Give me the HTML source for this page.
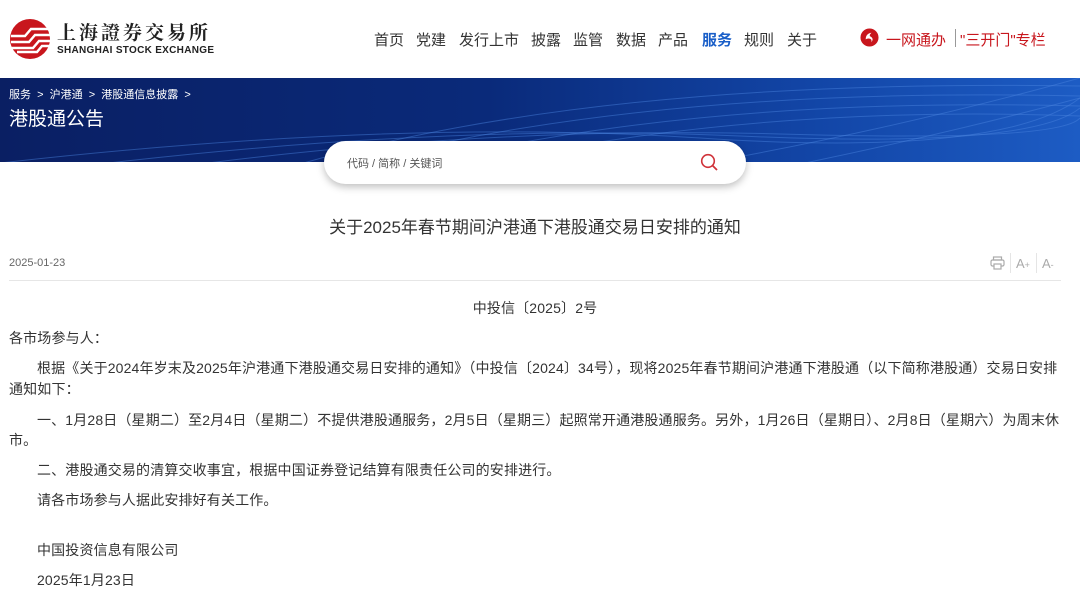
<!DOCTYPE html>
<html><head><meta charset="utf-8"><style>
*{margin:0;padding:0;box-sizing:border-box}
body{width:1080px;height:599px;overflow:hidden;background:#fff;font-family:"Liberation Sans","Noto Sans CJK SC",sans-serif;color:#333;position:relative}
.a{position:absolute;white-space:nowrap}
.nav span{position:absolute;top:29px;font-size:15px;color:#333}
.t{font-size:14px;color:#333;letter-spacing:0.15px}
</style></head><body>
<!-- logo -->
<svg class="a" style="left:9px;top:18px" width="42" height="42" viewBox="0 0 42 42">
<circle cx="21" cy="21" r="20" fill="#c8161d"/>
<path d="M2 18 H16 L22 11 H41 M2 24 H20 L26 17 H41 M2 30 H24 L30 23 H41 M8 34 H28 L33 28 H40" stroke="#fff" stroke-width="2.4" fill="none"/>
</svg>
<div class="a" style="left:57px;top:18px;font-size:19px;font-weight:bold;color:#222;font-family:'Noto Serif CJK SC',serif;letter-spacing:3px">上海證券交易所</div>
<div class="a" style="left:57px;top:45px;font-size:10px;font-weight:bold;color:#222;letter-spacing:0.3px">SHANGHAI STOCK EXCHANGE</div>
<div class="nav">
<span style="left:374px">首页</span><span style="left:416px">党建</span><span style="left:459px">发行上市</span><span style="left:531px">披露</span><span style="left:573px">监管</span><span style="left:616px">数据</span><span style="left:658px">产品</span><span style="left:702px;color:#1a5fc8;font-weight:bold">服务</span><span style="left:744px">规则</span><span style="left:787px">关于</span>
</div>
<svg class="a" style="left:860px;top:28px" width="19" height="19" viewBox="0 0 20 20"><circle cx="10" cy="10" r="9.5" fill="#c8161d"/><path d="M6 12 Q6 6 12 5 Q9 8 11 9 Q15 11 12 15 Q13 11 9 11 Q7 11 6 12Z" fill="#fff"/></svg>
<div class="a" style="left:886px;top:29px;font-size:15px;color:#c8161d">一网通办</div>
<div class="a" style="left:955px;top:29px;width:1px;height:18px;background:#999"></div>
<div class="a" style="left:960px;top:29px;font-size:15px;color:#c8161d">"三开门"专栏</div>
<!-- banner -->
<div class="a" style="left:0;top:78px;width:1080px;height:84px;background:linear-gradient(90deg,#0a1f63 0%,#0a2a7a 45%,#1245a6 75%,#1d5cc4 100%);overflow:hidden">
<svg width="1080" height="84" style="position:absolute;left:0;top:0">
<g fill="none" stroke="#4c86e0" stroke-opacity="0.45" stroke-width="1">
<path d="M0 85 Q400 40 700 60 T1080 20"/><path d="M100 86 Q450 45 740 58 T1080 30"/><path d="M200 86 Q500 48 780 56 T1080 40"/>
<path d="M300 86 Q600 0 1080 8"/><path d="M350 86 Q650 8 1080 18"/><path d="M420 86 Q700 18 1080 28"/><path d="M480 86 Q760 26 1080 38"/>
<path d="M700 86 Q900 50 1080 0"/><path d="M800 86 Q950 55 1080 20"/>
</g></svg>
<div class="a" style="left:9px;top:8px;font-size:11px;color:#fff">服务 &nbsp;&gt;&nbsp; 沪港通 &nbsp;&gt;&nbsp; 港股通信息披露 &nbsp;&gt;</div>
<div class="a" style="left:9px;top:26px;font-size:19px;color:#fff">港股通公告</div>
</div>
<!-- search -->
<div class="a" style="left:324px;top:141px;width:422px;height:43px;background:#fff;border-radius:22px;box-shadow:0 3px 8px rgba(0,0,0,0.25)"></div>
<div class="a" style="left:347px;top:155px;font-size:11px;color:#555">代码 / 简称 / 关键词</div>
<svg class="a" style="left:700px;top:153px" width="19" height="19" viewBox="0 0 19 19"><circle cx="8" cy="8" r="6.3" stroke="#d0333a" stroke-width="1.6" fill="none"/><path d="M12.5 12.5 L17 17" stroke="#d0333a" stroke-width="1.8"/></svg>
<!-- title -->
<div class="a" style="left:0;width:1070px;text-align:center;top:213px;font-size:17px;color:#333">关于2025年春节期间沪港通下港股通交易日安排的通知</div>
<div class="a" style="left:9px;top:257px;font-size:11px;color:#666">2025-01-23</div>
<svg class="a" style="left:990px;top:256px" width="15" height="14" viewBox="0 0 15 14"><rect x="3.5" y="1" width="8" height="3" fill="none" stroke="#aaa" stroke-width="1.2"/><rect x="1" y="4" width="13" height="6" rx="1.5" fill="none" stroke="#aaa" stroke-width="1.2"/><rect x="4" y="8" width="7" height="5" fill="#fff" stroke="#aaa" stroke-width="1.2"/></svg>
<div class="a" style="left:1010px;top:253px;width:1px;height:20px;background:#e5e5e5"></div>
<div class="a" style="left:1016px;top:256px;font-size:13px;color:#aaa">A<span style="font-size:9px">+</span></div>
<div class="a" style="left:1036px;top:253px;width:1px;height:20px;background:#e5e5e5"></div>
<div class="a" style="left:1042px;top:256px;font-size:13px;color:#aaa">A<span style="font-size:9px">-</span></div>
<div class="a" style="left:9px;top:280px;width:1052px;height:1px;background:#e6e6e6"></div>
<!-- body -->
<div class="a t" style="left:0;width:1070px;text-align:center;top:298px">中投信〔2025〕2号</div>
<div class="a t" style="left:9px;top:328px">各市场参与人：</div>
<div class="a t" style="left:37px;top:358px">根据《关于2024年岁末及2025年沪港通下港股通交易日安排的通知》（中投信〔2024〕34号），现将2025年春节期间沪港通下港股通（以下简称港股通）交易日安排</div>
<div class="a t" style="left:9px;top:379px">通知如下：</div>
<div class="a t" style="left:37px;top:410px">一、1月28日（星期二）至2月4日（星期二）不提供港股通服务，2月5日（星期三）起照常开通港股通服务。另外，1月26日（星期日）、2月8日（星期六）为周末休</div>
<div class="a t" style="left:9px;top:430px">市。</div>
<div class="a t" style="left:37px;top:460px">二、港股通交易的清算交收事宜，根据中国证券登记结算有限责任公司的安排进行。</div>
<div class="a t" style="left:37px;top:490px">请各市场参与人据此安排好有关工作。</div>
<div class="a t" style="left:37px;top:540px">中国投资信息有限公司</div>
<div class="a t" style="left:37px;top:570px">2025年1月23日</div>
</body></html>
